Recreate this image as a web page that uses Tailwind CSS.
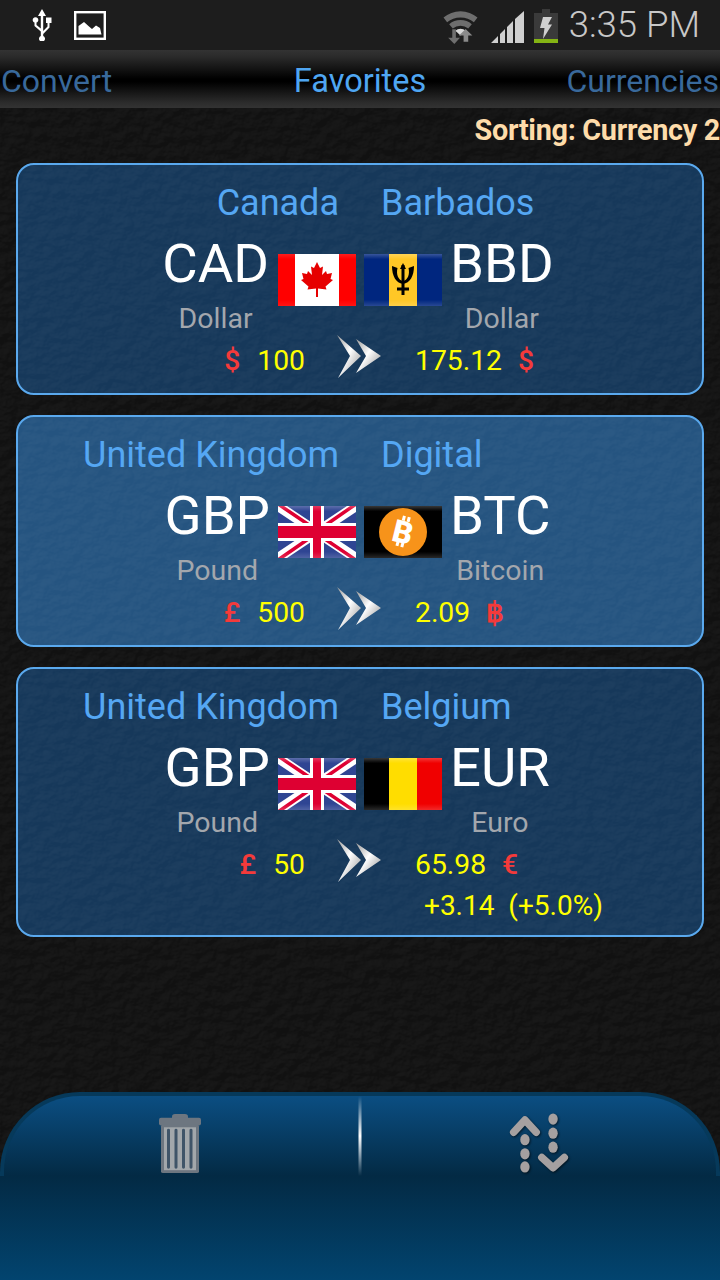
<!DOCTYPE html>
<html lang="en">
<head>
    <meta charset="UTF-8">
    <title>Favorites</title>
    <script src="https://cdn.jsdelivr.net/npm/@tailwindcss/browser@4"></script>
</head>
<body class="bg-black">
<svg class="absolute w-0 h-0">
    <defs>
        <filter id="leather" x="0" y="0" width="100%" height="100%" color-interpolation-filters="sRGB">
            <feTurbulence type="fractalNoise" baseFrequency="0.07 0.09" numOctaves="4" seed="11"/>
            <feDiffuseLighting surfaceScale="3" diffuseConstant="1" lighting-color="#ffffff">
                <feDistantLight azimuth="235" elevation="58"/>
            </feDiffuseLighting>
            <feColorMatrix type="matrix" values="0 0 0 0 1  0 0 0 0 1  0 0 0 0 1  0.09 0 0 0 -0.06"/>
        </filter>
        <linearGradient id="bar-sep" x1="0" y1="0" x2="0" y2="1">
            <stop offset="0" stop-color="#fff" stop-opacity="0"/>
            <stop offset="0.5" stop-color="#fff"/>
            <stop offset="1" stop-color="#fff" stop-opacity="0"/>
        </linearGradient>
        <linearGradient id="gloss" x1="0" y1="0" x2="0" y2="1">
            <stop offset="0" stop-color="#fff" stop-opacity="0.22"/>
            <stop offset="0.1" stop-color="#fff" stop-opacity="0"/>
            <stop offset="0.88" stop-color="#fff" stop-opacity="0"/>
            <stop offset="1" stop-color="#fff" stop-opacity="0.16"/>
        </linearGradient>
        <linearGradient id="chev" x1="0" y1="0" x2="1" y2="1">
            <stop offset="0" stop-color="#9a9a9a"/>
            <stop offset="0.45" stop-color="#ffffff"/>
            <stop offset="1" stop-color="#8a8a8a"/>
        </linearGradient>
        <g id="arrows">
            <path d="M0 0 L13 21 L1 43 L24 21 Z" fill="url(#chev)"/>
            <path d="M19 4 L29 21 L19 38 L44 21 Z" fill="url(#chev)"/>
        </g>
        <g id="flag-uk">
            <rect width="78" height="52" fill="#2f4593"/>
            <path d="M0 0 L78 52 M78 0 L0 52" stroke="#fff" stroke-width="10"/>
            <path d="M0 -2 L37 23 M78 54 L41 29 M0 54 L36 29 M78 -2 L42 23" stroke="#de0032" stroke-width="3.5"/>
            <rect x="32" width="14" height="52" fill="#fff"/>
            <rect y="17" width="78" height="18" fill="#fff"/>
            <rect x="35" width="8" height="52" fill="#de0032"/>
            <rect y="20" width="78" height="12" fill="#de0032"/>
            <rect width="78" height="52" fill="url(#gloss)"/>
        </g>
    </defs>
</svg>

<div class="relative w-[720px] h-[1280px] overflow-hidden bg-[#111111] font-['Roboto',sans-serif]">
    <!-- background -->
    <svg class="absolute left-0 top-[108px] w-[720px] h-[1172px]"><rect width="720" height="1172" filter="url(#leather)"/></svg>

    <div class="relative flex flex-col h-full">
        <!-- status bar -->
        <div class="h-[50px] bg-[#1d1d1d] flex items-center pl-[32px] pr-[20px]">
            <svg width="20" height="32" viewBox="0 0 20 32" class="mt-[-1px]" fill="#fff">
                <path d="M10 0 L14 7 H11.2 V22 L15.5 17.5 V14 H14 V8.5 H19.5 V14 H17.5 V18.5 L11.2 25 V27 A3 3 0 1 1 8.8 27 V22.5 L2.5 17 V13.6 A2.8 2.8 0 1 1 4.5 13.6 V16 L8.8 19.5 V7 H6 Z"/>
            </svg>
            <svg width="32" height="29" viewBox="0 0 32 29" class="ml-[22px]">
                <rect x="1.2" y="1.2" width="29.6" height="26.6" fill="none" stroke="#fff" stroke-width="2.4"/>
                <path d="M4.5 23.5 V15 L10 11 L15 15.5 L18 18 L22 14.5 L26 17 L27.5 23.5 Z" fill="#fff"/>
            </svg>
            <div class="flex-1"></div>
            <svg width="35" height="34" viewBox="0 0 34 36" preserveAspectRatio="none" class="mr-[13px] mt-[4px]">
                <path d="M0.5 8 A24 24 0 0 1 33.5 8 L30 13 A19 19 0 0 0 4 13 Z" fill="#6e6e6e"/>
                <path d="M6 15 A16 16 0 0 1 28 15 L24.5 19.5 A11 11 0 0 0 9.5 19.5 Z" fill="#6e6e6e"/>
                <path d="M12 22 A7 7 0 0 1 22 22 L17 27 Z" fill="#d8d8d8"/>
                <path d="M11 36 L5 29.5 H9 V20.5 H12.5 V29.5 H16.5 Z" fill="#6e6e6e"/>
                <path d="M22 20 L28.5 27 H24.5 V33.5 H20 V27 H15.5 Z" fill="#8a8a8a"/>
            </svg>
            <svg width="33" height="32" viewBox="0 0 33 32" class="mr-[10px] mt-[4px]">
                <path d="M0 32 L7 25 V32 Z M9 23 L14 18 V32 H9 Z M16 16 L22 10 V32 H16 Z M24 8 L33 0 V32 H24 Z" fill="#cfcfcf"/>
            </svg>
            <svg width="24" height="34" viewBox="0 0 24 34" class="mr-[11px] mt-[2px]">
                <rect x="8" y="0" width="8" height="4" fill="#3a3a3a"/>
                <rect x="0" y="4" width="24" height="26" fill="#3a3a3a"/>
                <rect x="0" y="30" width="24" height="4" fill="#84b414"/>
                <path d="M9 8 H18 L14 15.5 H18 L9 30 L10.5 19 H6 Z" fill="#cfcfcf"/>
            </svg>
            <span class="text-[36.5px] leading-none font-light text-[#c8c8c8]">3:35 PM</span>
        </div>

        <!-- tabs -->
        <div class="h-[58px] pt-[4px] bg-[linear-gradient(to_bottom,#333333_0%,#2a2a2a_12%,#000000_50%,#000000_55%,#2b2b2b_90%,#333333_100%)] grid grid-cols-[1fr_auto_1fr] items-center text-[32px] leading-none text-[#39699b]">
            <span class="pl-[1px]">Convert</span>
            <span class="text-[32.5px] text-[#4fa6f2]">Favorites</span>
            <span class="pr-[1px] text-right">Currencies</span>
        </div>

        <!-- sort label -->
        <div class="h-[55px] pt-[8px] text-right text-[28.8px] leading-[28px] font-bold text-[#fedcaa] tracking-[-0.3px]">Sorting: Currency 2</div>

        <!-- favorites -->
        <div class="flex flex-col gap-[20px] px-[16px]">
            <!-- CAD -> BBD -->
            <div class="relative h-[232px] rounded-[18px] border-2 border-[#5aa9ee] bg-[#16385a] overflow-hidden">
                <svg class="absolute inset-0 w-full h-full"><rect width="100%" height="100%" filter="url(#leather)"/></svg>
                <div class="relative">
                    <div class="h-[76px] flex text-[36px] leading-none text-[#55a7f3] pt-[20px]">
                        <div class="w-[321px] text-right">Canada</div>
                        <div class="ml-[42px]">Barbados</div>
                    </div>
                    <div class="flex h-[94px]">
                        <div class="w-[338px] flex justify-end">
                            <div class="flex flex-col items-center">
                                <span class="text-[54.5px] leading-[50px] text-white mt-[-3px]">CAD</span>
                                <span class="text-[28.5px] leading-none text-[#a3a7ad] mt-[17px]">Dollar</span>
                            </div>
                            <svg width="78" height="52" viewBox="0 0 78 52" class="ml-[9px] mt-[13px]">
                                <rect width="78" height="52" fill="#fff"/>
                                <rect width="17" height="52" fill="#f00"/>
                                <rect x="61" width="17" height="52" fill="#f00"/>
                                <path d="M39 8 L42 14 L45 12.5 L44 21 L48 17 L49 20 L54 19 L52.5 25 L55 26 L47.5 32.5 L48.5 35.5 L40 34.5 V43 H38 V34.5 L29.5 35.5 L30.5 32.5 L23 26 L25.5 25 L24 19 L29 20 L30 17 L34 21 L33 12.5 L36 14 Z" fill="#e60000"/>
                                <rect width="78" height="52" fill="url(#gloss)" opacity="0.5"/>
                            </svg>
                        </div>
                        <div class="flex ml-[8px]">
                            <svg width="78" height="52" viewBox="0 0 78 52" class="mt-[13px]">
                                <rect width="78" height="52" fill="#00267f"/>
                                <rect x="25" width="28" height="52" fill="#ffc726"/>
                                <path d="M39 11 V41 M33 35 H45" fill="none" stroke="#000" stroke-width="3"/>
                                <path d="M28 12 L33.5 14 C32 20 34 26 39 27 C44 26 46 20 44.5 14 L50 12 C50 22 46 29 39 30 C32 29 28 22 28 12 Z" fill="#000"/>
                                <path d="M39 9 L42 15 H36 Z" fill="#000"/>
                                <rect width="78" height="52" fill="url(#gloss)"/>
                            </svg>
                            <div class="flex flex-col items-center ml-[8px]">
                                <span class="text-[54.5px] leading-[50px] text-white mt-[-3px]">BBD</span>
                                <span class="text-[28.5px] leading-none text-[#a3a7ad] mt-[17px]">Dollar</span>
                            </div>
                        </div>
                    </div>
                    <div class="flex h-[44px] text-[28.3px] leading-none items-start">
                        <div class="w-[287px] text-right pt-[12px]"><span class="text-[#f43a3a] font-medium">$</span><span class="text-[#ffff00] ml-[17px]">100</span></div>
                        <svg width="44" height="43" class="ml-[32px]"><use href="#arrows"/></svg>
                        <div class="ml-[34px] pt-[12px]"><span class="text-[#ffff00]">175.12</span><span class="text-[#f43a3a] font-medium ml-[16px]">$</span></div>
                    </div>
                </div>
            </div>

            <!-- GBP -> BTC -->
            <div class="relative h-[232px] rounded-[18px] border-2 border-[#5aa9ee] bg-[#255480] overflow-hidden">
                <svg class="absolute inset-0 w-full h-full"><rect width="100%" height="100%" filter="url(#leather)"/></svg>
                <div class="relative">
                    <div class="h-[76px] flex text-[36px] leading-none text-[#55a7f3] pt-[20px]">
                        <div class="w-[321px] text-right">United Kingdom</div>
                        <div class="ml-[42px]">Digital</div>
                    </div>
                    <div class="flex h-[94px]">
                        <div class="w-[338px] flex justify-end">
                            <div class="flex flex-col items-center">
                                <span class="text-[54.5px] leading-[50px] text-white mt-[-3px]">GBP</span>
                                <span class="text-[28.5px] leading-none text-[#a3a7ad] mt-[17px]">Pound</span>
                            </div>
                            <svg width="78" height="52" viewBox="0 0 78 52" class="ml-[8px] mt-[13px]"><use href="#flag-uk"/></svg>
                        </div>
                        <div class="flex ml-[8px]">
                            <svg width="78" height="52" viewBox="0 0 78 52" class="mt-[13px]">
                                <rect width="78" height="52" fill="#000"/>
                                <rect width="78" height="52" fill="url(#gloss)"/>
                                <circle cx="39" cy="26" r="24" fill="#f7931a"/>
                                <g transform="rotate(14 39 26)" fill="#fff">
                                    <text x="39" y="37" text-anchor="middle" font-family="Roboto" font-weight="900" font-size="31">B</text>
                                    <rect x="35" y="10" width="3" height="5"/>
                                    <rect x="40" y="10" width="3" height="5"/>
                                    <rect x="35" y="36" width="3" height="5"/>
                                    <rect x="40" y="36" width="3" height="5"/>
                                </g>
                            </svg>
                            <div class="flex flex-col items-center ml-[8px]">
                                <span class="text-[54.5px] leading-[50px] text-white mt-[-3px]">BTC</span>
                                <span class="text-[28.5px] leading-none text-[#a3a7ad] mt-[17px]">Bitcoin</span>
                            </div>
                        </div>
                    </div>
                    <div class="flex h-[44px] text-[28.3px] leading-none items-start">
                        <div class="w-[287px] text-right pt-[12px]"><span class="text-[#f43a3a] font-medium">£</span><span class="text-[#ffff00] ml-[17px]">500</span></div>
                        <svg width="44" height="43" class="ml-[32px]"><use href="#arrows"/></svg>
                        <div class="ml-[34px] pt-[12px]"><span class="text-[#ffff00]">2.09</span><span class="text-[#f43a3a] font-bold ml-[16px]">฿</span></div>
                    </div>
                </div>
            </div>

            <!-- GBP -> EUR -->
            <div class="relative h-[270px] rounded-[18px] border-2 border-[#5aa9ee] bg-[#16385a] overflow-hidden">
                <svg class="absolute inset-0 w-full h-full"><rect width="100%" height="100%" filter="url(#leather)"/></svg>
                <div class="relative">
                    <div class="h-[76px] flex text-[36px] leading-none text-[#55a7f3] pt-[20px]">
                        <div class="w-[321px] text-right">United Kingdom</div>
                        <div class="ml-[42px]">Belgium</div>
                    </div>
                    <div class="flex h-[94px]">
                        <div class="w-[338px] flex justify-end">
                            <div class="flex flex-col items-center">
                                <span class="text-[54.5px] leading-[50px] text-white mt-[-3px]">GBP</span>
                                <span class="text-[28.5px] leading-none text-[#a3a7ad] mt-[17px]">Pound</span>
                            </div>
                            <svg width="78" height="52" viewBox="0 0 78 52" class="ml-[8px] mt-[13px]"><use href="#flag-uk"/></svg>
                        </div>
                        <div class="flex ml-[8px]">
                            <svg width="78" height="52" viewBox="0 0 78 52" class="mt-[13px]">
                                <rect width="25" height="52" fill="#000"/>
                                <rect x="25" width="28" height="52" fill="#ffdd00"/>
                                <rect x="53" width="25" height="52" fill="#f00000"/>
                                <rect width="78" height="52" fill="url(#gloss)"/>
                            </svg>
                            <div class="flex flex-col items-center ml-[8px]">
                                <span class="text-[54.5px] leading-[50px] text-white mt-[-3px]">EUR</span>
                                <span class="text-[28.5px] leading-none text-[#a3a7ad] mt-[17px]">Euro</span>
                            </div>
                        </div>
                    </div>
                    <div class="flex h-[44px] text-[28.3px] leading-none items-start">
                        <div class="w-[287px] text-right pt-[12px]"><span class="text-[#f43a3a] font-medium">£</span><span class="text-[#ffff00] ml-[17px]">50</span></div>
                        <svg width="44" height="43" class="ml-[32px]"><use href="#arrows"/></svg>
                        <div class="ml-[34px] pt-[12px]"><span class="text-[#ffff00]">65.98</span><span class="text-[#f43a3a] font-medium ml-[16px]">€</span></div>
                    </div>
                    <div class="pl-[406px] pt-[9px] text-[28px] leading-none text-[#ffff00] whitespace-pre">+3.14  (+5.0%)</div>
                </div>
            </div>
        </div>

        <!-- bottom bar -->
        <div class="absolute left-0 right-0 bottom-0 flex flex-col">
            <div class="h-[84px] rounded-t-[80px] border-t-4 border-x-4 border-[#06395a] bg-[linear-gradient(to_bottom,#0b4e82,#032a44)] flex">
                <div class="flex-1 flex justify-center pt-[17px]">
                    <svg width="44" height="61" viewBox="0 0 44 64" preserveAspectRatio="none" class="mr-[2px] blur-[0.5px]">
                        <path d="M14 4 Q14 1 17 1 H27 Q30 1 30 4 V6 H14 Z" fill="#6d7680"/>
                        <rect x="1" y="5" width="42" height="8" rx="2" fill="#6d7680"/>
                        <rect x="3" y="12" width="38" height="51" rx="2" fill="#6d7680"/>
                        <rect x="6" y="15" width="32" height="45" fill="#a2a7ab"/>
                        <path d="M10.5 18 V57 M18 18 V57 M25.5 18 V57 M33 18 V57" stroke="#3f5468" stroke-width="3" stroke-linecap="round"/>
                    </svg>
                </div>
                <svg width="4" height="80" class="shrink-0"><rect x="0.5" width="3" height="80" fill="url(#bar-sep)"/></svg>
                <div class="flex-1 flex justify-center pt-[17px]">
                    <svg width="60" height="60" viewBox="2 0 64 63" fill="#a5a0a0" class="drop-shadow-[1px_1px_1px_rgba(0,0,0,0.6)]">
                        <path d="M7 20 L19 7 L31 20" fill="none" stroke="#a5a0a0" stroke-width="8" stroke-linecap="round" stroke-linejoin="round"/>
                        <ellipse cx="19" cy="28" rx="5" ry="6"/>
                        <ellipse cx="19" cy="43" rx="5" ry="6"/>
                        <ellipse cx="19" cy="57" rx="5" ry="6"/>
                        <ellipse cx="49" cy="6" rx="5" ry="6"/>
                        <ellipse cx="49" cy="21" rx="5" ry="6"/>
                        <ellipse cx="49" cy="36" rx="5" ry="6"/>
                        <path d="M37 47 L49 58 L61 47" fill="none" stroke="#a5a0a0" stroke-width="8" stroke-linecap="round" stroke-linejoin="round"/>
                    </svg>
                </div>
            </div>
            <div class="h-[104px] bg-[linear-gradient(to_bottom,#032a44,#02446f)]"></div>
        </div>
    </div>
</div>
</body>
</html>
